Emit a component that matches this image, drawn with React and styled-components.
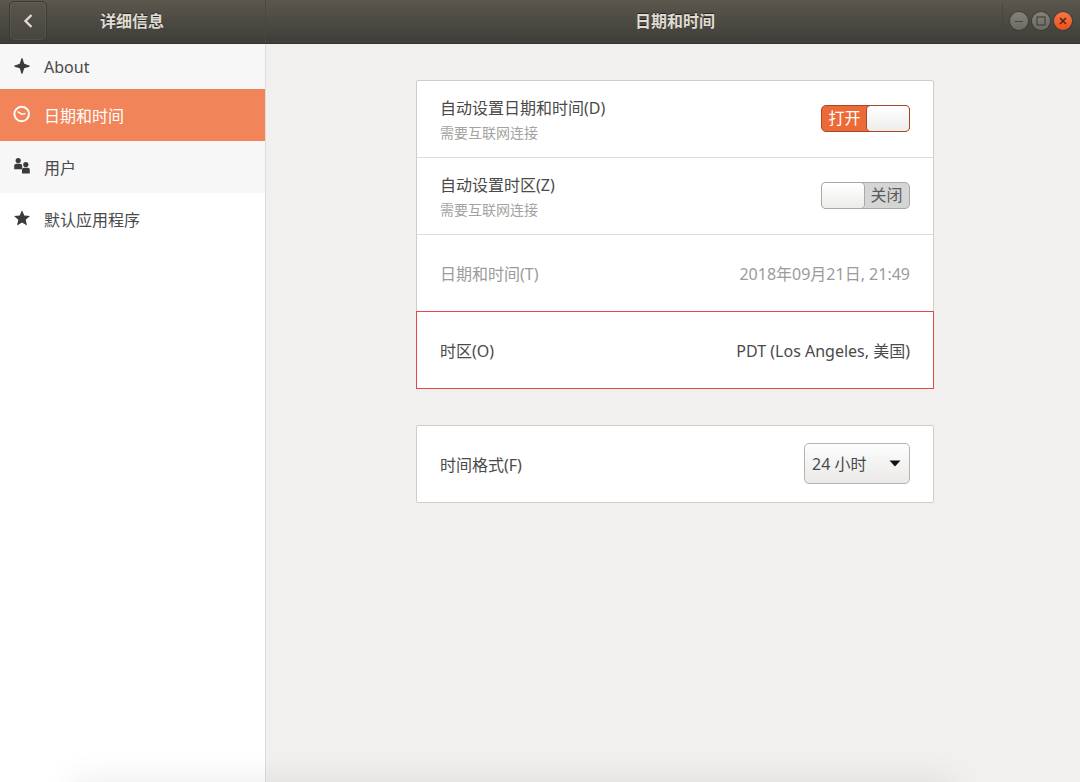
import React, { useState } from 'react';
import styled, { createGlobalStyle, css } from 'styled-components';

const GlobalStyle = createGlobalStyle`
  *, *::before, *::after {
    box-sizing: border-box;
  }

  body {
    margin: 0;
    background: #f1f0ee;
    color: #4a4a4a;
    font-family: 'Noto Sans', 'Noto Sans CJK SC', sans-serif;
    font-size: 16px;
    line-height: 24px;
  }

  button, input, select {
    font: inherit;
    color: inherit;
  }
`;

const Window = styled.div`
  display: flex;
  flex-direction: column;
  min-height: 100vh;
  overflow: hidden;
`;

const HeaderBar = styled.header`
  display: flex;
  height: 44px;
  background: linear-gradient(#5b574d, #3e3d39);
  border-bottom: 1px solid #37352f;
  color: #dfdbd2;
`;

const HeaderSide = styled.div`
  display: grid;
  grid-template-columns: 1fr auto 1fr;
  align-items: center;
  flex: 0 0 266px;
  padding: 0 10px 1px 9px;
  border-right: 1px solid #4a483f;
`;

const HeaderMain = styled.div`
  display: grid;
  grid-template-columns: 1fr auto 1fr;
  align-items: center;
  flex: 1;
  padding: 0 8px 1px 12px;
`;

const Title = styled.h1`
  grid-column: 2;
  margin: 0;
  font-size: 16px;
  font-weight: 700;
  text-shadow: 0 -1px rgba(0, 0, 0, 0.5);
`;

const BackButton = styled.button`
  display: grid;
  place-items: center;
  width: 38px;
  height: 40px;
  padding: 0;
  border: 1px solid #3c3a35;
  border-radius: 5px;
  background: linear-gradient(#59564c, #474540);
  box-shadow: inset 0 0 0 1px rgba(255, 255, 255, 0.06);
`;

const WindowButtons = styled.div`
  display: flex;
  align-items: center;
  justify-self: end;
  gap: 4px;
  height: 34px;
  padding-left: 7px;
  border-left: 1px solid #47453f;
`;

const WindowButton = styled.button`
  width: 18px;
  height: 18px;
  padding: 0;
  border: 0;
  border-radius: 50%;
  background: ${({ $close }) =>
    $close
      ? 'linear-gradient(#f6774b, #e9511d)'
      : 'linear-gradient(#84827b, #6c6a64)'};
  box-shadow: 0 0 0 1px rgba(40, 38, 32, 0.35);
  color: ${({ $close }) => ($close ? '#5a2410' : '#45433d')};

  svg {
    display: block;
  }
`;

const Body = styled.div`
  display: flex;
  flex: 1;
`;

const Sidebar = styled.nav`
  flex: 0 0 266px;
  border-right: 1px solid #dddcda;
  background: #fff;
`;

const NavItem = styled.a`
  display: flex;
  align-items: center;
  gap: 13px;
  height: ${({ $compact }) => ($compact ? '45px' : '52px')};
  padding: ${({ $compact }) => ($compact ? '0 13px' : '2px 13px 0')};
  background: ${({ $shaded }) => ($shaded ? '#f7f7f7' : 'transparent')};
  color: #4a4a4a;
  text-decoration: none;

  svg {
    flex: none;
    color: #3b3b3b;
    margin-bottom: ${({ $compact }) => ($compact ? '2px' : '4px')};
  }

  ${({ $active }) =>
    $active &&
    css`
      background: #f2845a;
      color: #fff;

      svg {
        color: #fff;
      }
    `}
`;

const Main = styled.main`
  display: flex;
  flex: 1;
  flex-direction: column;
  align-items: center;
  gap: 36px;
  padding: 36px 24px 36px 28px;
`;

const Card = styled.section`
  width: 100%;
  max-width: 518px;
  border: 1px solid #cfcdcb;
  border-radius: 2px;
  background: #fff;
`;

const Row = styled.div`
  display: flex;
  align-items: center;
  justify-content: space-between;
  gap: 16px;
  min-height: 76px;
  padding: 0 23px 2px;
  color: ${({ $disabled }) => ($disabled ? '#9b9b9b' : 'inherit')};

  & + & {
    min-height: 77px;
    border-top: 1px solid #dcdcdc;
  }

  ${({ $marked }) =>
    $marked &&
    css`
      && {
        min-height: 78px;
        margin: 0 -1px -1px;
        border: 1px solid #e0484e;
      }
    `}
`;

const RowLabel = styled.label`
  display: flex;
  flex-direction: column;
  gap: 1px;
  padding-top: 4px;
`;

const RowText = styled.span`
  padding-top: 4px;
`;

const Hint = styled.small`
  color: #a3a3a0;
  font-size: 14px;
`;

const Switch = styled.span`
  position: relative;
  display: flex;
  flex: none;
  flex-direction: ${({ $on }) => ($on ? 'row' : 'row-reverse')};
  width: 89px;
  height: 27px;
  border: 1px solid ${({ $on }) => ($on ? '#a8482a' : '#a9a8a6')};
  border-radius: 5px;
  background: ${({ $on }) => ($on ? '#eb6a37' : '#d5d5d5')};
  color: ${({ $on }) => ($on ? '#fff' : '#5a5a5a')};
`;

const SwitchInput = styled.input`
  position: absolute;
  inset: 0;
  width: 100%;
  height: 100%;
  margin: 0;
  opacity: 0;
`;

const SwitchText = styled.span`
  flex: 1;
  line-height: 25px;
  text-align: center;
`;

const SwitchKnob = styled.span`
  width: 42px;
  border-radius: 4px;
  background: linear-gradient(#fff, #ececeb);
  box-shadow: 0 0 0 1px ${({ $on }) => ($on ? '#a8482a' : '#a9a8a6')};
`;

const SelectBox = styled.span`
  position: relative;
  display: flex;
  flex: none;

  svg {
    position: absolute;
    top: 17px;
    right: 9px;
    pointer-events: none;
  }
`;

const Select = styled.select`
  appearance: none;
  width: 106px;
  height: 41px;
  padding: 2px 28px 0 7px;
  border: 1px solid #b5b3b0;
  border-radius: 5px;
  background: linear-gradient(#fdfdfd, #eae9e8);
`;

const BottomShade = styled.div`
  position: fixed;
  right: 125px;
  bottom: -20px;
  left: 72px;
  height: 20px;
  box-shadow: 0 0 32px rgba(0, 0, 0, 0.1);
  pointer-events: none;
`;

const SparkIcon = () => (
  <svg width="18" height="18" viewBox="0 0 18 18" fill="currentColor">
    <path d="M9 1C9.9 1 10.4 5 11.3 6.7C13 7.6 17 8.1 17 9C17 9.9 13 10.4 11.3 11.3C10.4 13 9.9 17 9 17C8.1 17 7.6 13 6.7 11.3C5 10.4 1 9.9 1 9C1 8.1 5 7.6 6.7 6.7C7.6 5 8.1 1 9 1Z" />
  </svg>
);

const ClockIcon = () => (
  <svg width="18" height="18" viewBox="0 0 18 18" fill="none" stroke="currentColor">
    <circle cx="8.7" cy="9" r="7.3" strokeWidth="2" />
    <path d="M5 6.8L8.8 9.2L12 8.6" strokeWidth="1.4" strokeLinecap="round" />
  </svg>
);

const UsersIcon = () => (
  <svg width="18" height="18" viewBox="0 0 18 18" fill="currentColor">
    <circle cx="5.2" cy="3.6" r="2.6" />
    <path d="M1.2 12.2V9C1.2 7.6 2.2 6.8 3.4 6.8H7C8.2 6.8 9.2 7.6 9.2 9V12.2Z" />
    <circle cx="12.8" cy="7.6" r="2.6" />
    <path d="M9 16.4V13C9 11.6 9.8 10.8 11 10.8H14.8C16 10.8 16.8 11.6 16.8 13V16.4Z" />
  </svg>
);

const StarIcon = () => (
  <svg width="18" height="18" viewBox="0 0 18 18" fill="currentColor">
    <path d="M9 1.2L11.3 6.5L17 7L12.7 10.8L14 16.4L9 13.5L4 16.4L5.3 10.8L1 7L6.7 6.5Z" />
  </svg>
);

const NAV_ITEMS = [
  { id: 'about', label: 'About', icon: SparkIcon, compact: true, shaded: true },
  { id: 'datetime', label: '日期和时间', icon: ClockIcon, active: true },
  { id: 'users', label: '用户', icon: UsersIcon, shaded: true },
  { id: 'apps', label: '默认应用程序', icon: StarIcon },
];

const SwitchRow = ({ id, label, hint, initial }) => {
  const [on, setOn] = useState(initial);
  return (
    <Row>
      <RowLabel htmlFor={id}>
        {label}
        <Hint>{hint}</Hint>
      </RowLabel>
      <Switch $on={on}>
        <SwitchText>{on ? '打开' : '关闭'}</SwitchText>
        <SwitchKnob $on={on} />
        <SwitchInput
          id={id}
          type="checkbox"
          checked={on}
          onChange={(e) => setOn(e.target.checked)}
        />
      </Switch>
    </Row>
  );
};

const App = () => {
  return (
    <Window>
      <GlobalStyle />
      <HeaderBar>
        <HeaderSide>
          <BackButton type="button" aria-label="返回">
            <svg width="12" height="16" viewBox="0 0 12 16" fill="none">
              <path d="M9.5 2L3.5 8L9.5 14" stroke="#dfdbd2" strokeWidth="2.4" />
            </svg>
          </BackButton>
          <Title>详细信息</Title>
        </HeaderSide>
        <HeaderMain>
          <Title as="h2">日期和时间</Title>
          <WindowButtons>
            <WindowButton type="button" aria-label="最小化">
              <svg width="18" height="18" viewBox="0 0 18 18" stroke="currentColor">
                <path d="M5 9.5H13" />
              </svg>
            </WindowButton>
            <WindowButton type="button" aria-label="最大化">
              <svg width="18" height="18" viewBox="0 0 18 18" stroke="currentColor" fill="none">
                <rect x="5" y="5" width="8" height="8" strokeWidth="1.2" />
              </svg>
            </WindowButton>
            <WindowButton type="button" aria-label="关闭" $close>
              <svg width="18" height="18" viewBox="0 0 18 18" stroke="currentColor">
                <path d="M6 6L12 12M12 6L6 12" strokeWidth="1.6" />
              </svg>
            </WindowButton>
          </WindowButtons>
        </HeaderMain>
      </HeaderBar>
      <Body>
        <Sidebar>
          {NAV_ITEMS.map(({ id, label, icon: Icon, active, shaded, compact }) => (
            <NavItem
              key={id}
              href={`#${id}`}
              $active={active}
              $shaded={shaded}
              $compact={compact}
            >
              <Icon />
              {label}
            </NavItem>
          ))}
        </Sidebar>
        <Main>
          <Card>
            <SwitchRow
              id="auto-time"
              label="自动设置日期和时间(D)"
              hint="需要互联网连接"
              initial
            />
            <SwitchRow
              id="auto-zone"
              label="自动设置时区(Z)"
              hint="需要互联网连接"
              initial={false}
            />
            <Row $disabled>
              <RowText>日期和时间(T)</RowText>
              <RowText>2018年09月21日, 21:49</RowText>
            </Row>
            <Row $marked>
              <RowText>时区(O)</RowText>
              <RowText>PDT (Los Angeles, 美国)</RowText>
            </Row>
          </Card>
          <Card>
            <Row>
              <RowLabel htmlFor="time-format">时间格式(F)</RowLabel>
              <SelectBox>
                <Select id="time-format" defaultValue="24">
                  <option value="24">24 小时</option>
                  <option value="12">上午/下午</option>
                </Select>
                <svg width="12" height="7" viewBox="0 0 12 7">
                  <path d="M0.5 0.5H11.5L6 6.5Z" fill="#111" />
                </svg>
              </SelectBox>
            </Row>
          </Card>
        </Main>
      </Body>
      <BottomShade />
    </Window>
  );
};

export default App;
